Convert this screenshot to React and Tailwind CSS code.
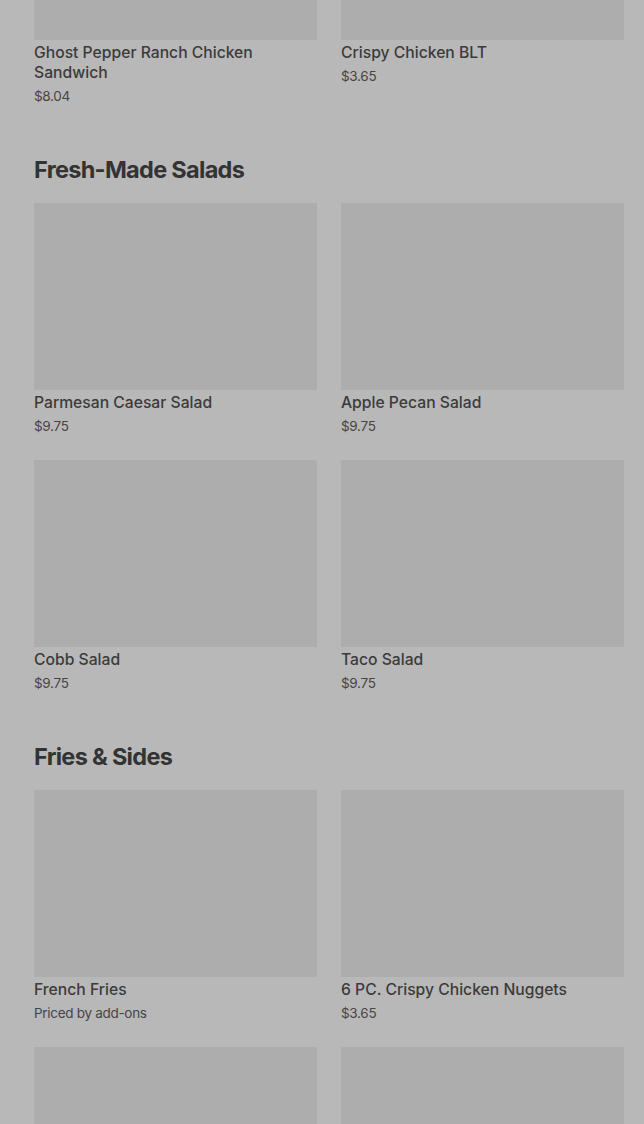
import React from 'react';

const SECTIONS = [
  {
    title: null,
    items: [
      { name: 'Ghost Pepper Ranch Chicken Sandwich', price: '$8.04' },
      { name: 'Crispy Chicken BLT', price: '$3.65' },
    ],
  },
  {
    title: 'Fresh-Made Salads',
    items: [
      { name: 'Parmesan Caesar Salad', price: '$9.75' },
      { name: 'Apple Pecan Salad', price: '$9.75' },
      { name: 'Cobb Salad', price: '$9.75' },
      { name: 'Taco Salad', price: '$9.75' },
    ],
  },
  {
    title: 'Fries & Sides',
    items: [
      { name: 'French Fries', price: 'Priced by add-ons' },
      { name: '6 PC. Crispy Chicken Nuggets', price: '$3.65' },
      { name: '', price: '' },
      { name: '', price: '' },
    ],
  },
];

function ItemCard({ item }) {
  return (
    <div className="flex flex-col">
      <div className="h-[187px] w-full bg-[#adadad]" />
      <div className="mt-[3px] text-[15.7px] leading-5 font-medium text-[#3b3b3b] font-['Inter',sans-serif]">
        {item.name}
      </div>
      <div className="mt-[5px] text-[13.5px] leading-4 tracking-[-0.3px] text-[#454545] font-['Inter',sans-serif]">
        {item.price}
      </div>
    </div>
  );
}

export default function App() {
  return (
    <div className="h-[1124px] w-[644px] overflow-hidden bg-[#b8b8b8]">
      <div className="-mt-[147px] pl-[34px] pr-[20px]">
        {SECTIONS.map((section, i) => (
          <section key={i} className={i > 0 ? 'mt-[50px]' : ''}>
            {section.title && (
              <h2 className="mb-[17px] h-8 text-[23.5px] leading-8 font-bold tracking-[-0.7px] text-[#333333] font-['Inter',sans-serif]">
                {section.title}
              </h2>
            )}
            <div className="grid grid-cols-2 gap-x-6 gap-y-[26px]">
              {section.items.map((item, j) => (
                <ItemCard key={j} item={item} />
              ))}
            </div>
          </section>
        ))}
      </div>
    </div>
  );
}
